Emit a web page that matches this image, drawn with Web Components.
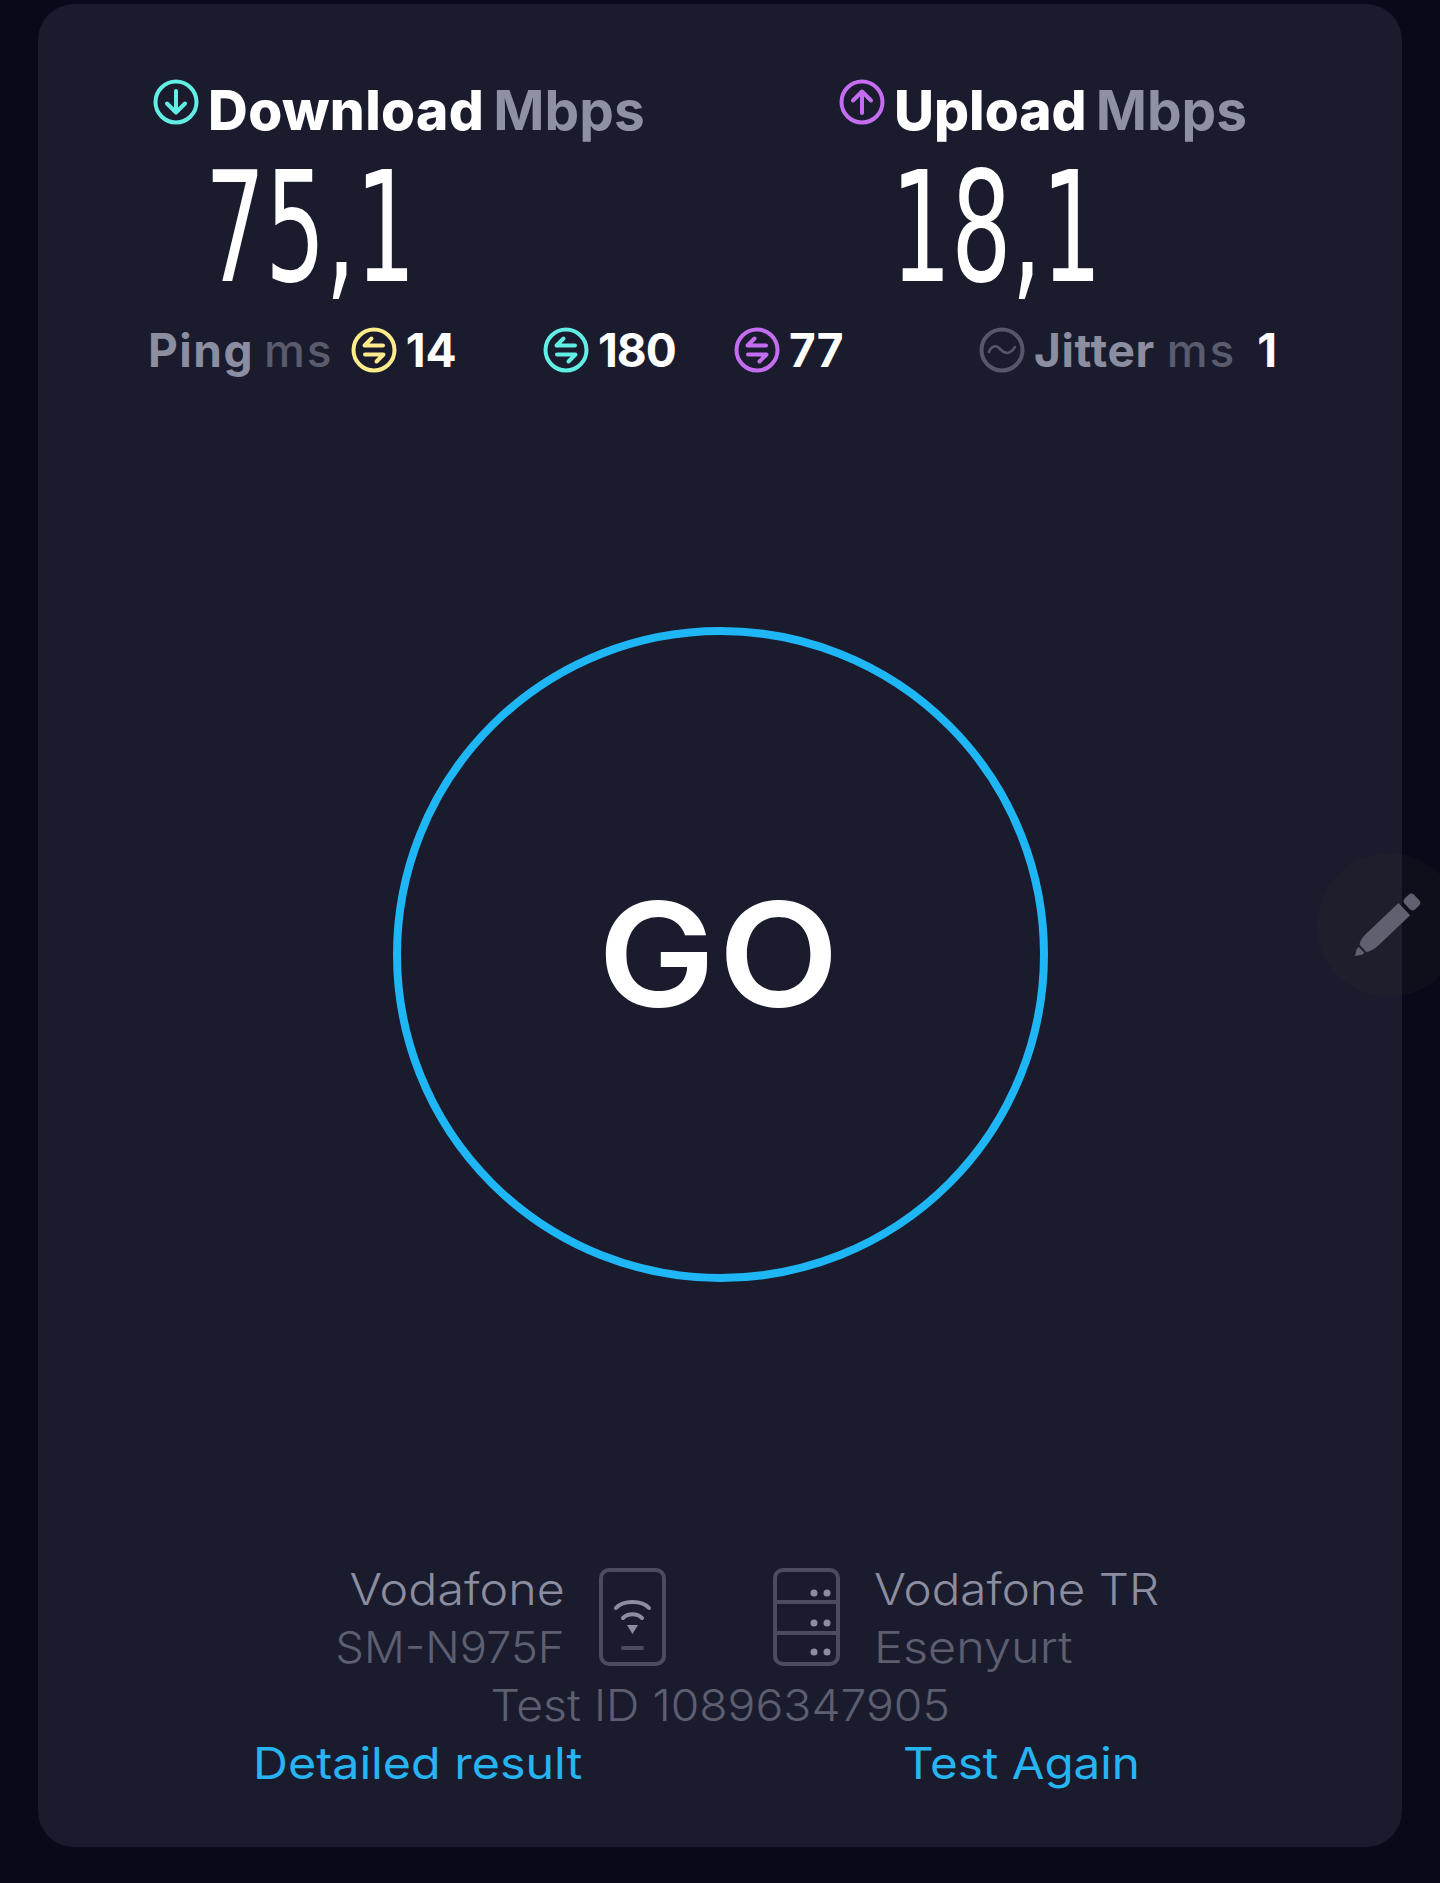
<!DOCTYPE html>
<html lang="en">
<head>
<meta charset="utf-8">
<title>Speed test</title>
<style>
html, body { margin: 0; padding: 0; background: #080a19; }
body { width: 1440px; height: 1883px; overflow: hidden; font-family: Inter, "Liberation Sans", sans-serif; }
</style>
</head>
<body>
<speed-card>
    <metric-row>
        <speed-metric kind="down" label="Download" unit="Mbps" value="75,1"></speed-metric>
        <speed-metric kind="up" label="Upload" unit="Mbps" value="18,1"></speed-metric>
    </metric-row>
    <stat-row></stat-row>
    <go-button></go-button>
    <test-info></test-info>
    <edit-fab></edit-fab>
</speed-card>

<script>
'use strict';

const ICON_COLORS = {down: '#62eee4', up: '#c56df0', ping: '#fdeb8c', muted: '#55586a'};

function circleIcon(color, inner) {
    return `<svg xmlns="http://www.w3.org/2000/svg" width="46" height="46" viewBox="0 0 46 46" fill="none"
        stroke="${color}" stroke-linecap="round" stroke-linejoin="round">
        <circle cx="23" cy="23" r="20.5" stroke-width="4"/>
        ${inner}
    </svg>`;
}

const TRANSFER = `<path stroke-width="4" d="M32 18.5H13.5L20.5 11.5M14 27.5H32.5L25.5 34.5"/>`;
const ARROW_DOWN = `<path stroke-width="4" d="M23 12V33M14 24.5L23 33.5L32 24.5"/>`;
const ARROW_UP = `<path stroke-width="4" d="M23 34V13M14 21.5L23 12.5L32 21.5"/>`;
const WAVE = `<path stroke-width="2.5" d="M10 25C12 19 17 18 20 21C23 24 27 28 31 25C33 24 35 22 36 20"/>`;

class SpeedCard extends HTMLElement {
    constructor() {
        super();
        this.shadow = this.attachShadow({mode: 'open'});
        this.shadow.innerHTML = `
            <style>
            :host {
                display: block;
                position: relative;
                box-sizing: border-box;
                width: 1364px;
                height: 1843px;
                margin: 4px 0 0 38px;
                padding-top: 76px;
                background: #1a1c2e;
                border-radius: 36px;
            }
            </style>
            <slot></slot>
        `;
    }
}

class MetricRow extends HTMLElement {
    constructor() {
        super();
        this.shadow = this.attachShadow({mode: 'open'});
        this.shadow.innerHTML = `
            <style>
            :host {
                display: grid;
                grid-template-columns: 686px 1fr;
                padding-left: 115px;
            }
            </style>
            <slot></slot>
        `;
    }
}

class SpeedMetric extends HTMLElement {
    constructor() {
        super();
        this.shadow = this.attachShadow({mode: 'open'});
        const kind = this.getAttribute('kind');
        const inner = kind === 'down' ? ARROW_DOWN : ARROW_UP;
        this.shadow.innerHTML = `
            <style>
            :host {
                display: block;
            }
            .head {
                display: flex;
                height: 60px;
                line-height: 60px;
                font-size: 55px;
                font-weight: 800;
                white-space: nowrap;
            }
            .head svg {
                flex: none;
                margin: -1px 9px 0 0;
            }
            .label { color: #fff; letter-spacing: ${kind === 'down' ? '0.4px' : '0'}; }
            .unit { color: #8e90a4; font-weight: 700; margin-left: 9px; }
            .value {
                height: 128px;
                margin: 23px 0 0 52px;
                line-height: 130px;
                font-family: "DejaVu Sans", sans-serif;
                font-size: 154px;
                color: #fff;
                white-space: nowrap;
                transform: scaleX(0.615);
                transform-origin: 0 50%;
            }
            </style>
            <div class="head">
                ${circleIcon(ICON_COLORS[kind], inner)}
                <span class="label">${this.getAttribute('label')}</span>
                <span class="unit">${this.getAttribute('unit')}</span>
            </div>
            <div class="value">${this.getAttribute('value')}</div>
        `;
    }
}

class StatRow extends HTMLElement {
    constructor() {
        super();
        this.shadow = this.attachShadow({mode: 'open'});
        this.shadow.innerHTML = `
            <style>
            :host {
                display: flex;
                align-items: center;
                height: 50px;
                margin-top: 34px;
                padding-left: 110px;
                font-size: 46px;
                line-height: 50px;
                font-weight: 700;
                white-space: nowrap;
            }
            .item { display: flex; align-items: center; }
            svg { flex: none; margin-right: 9px; }
            .name { color: #8b8da0; }
            .unit { color: #5a5c6e; font-weight: 500; }
            .num { color: #fff; }
            .ping { width: 308px; }
            .ping .name { letter-spacing: 1.5px; }
            .ping .unit { margin: 0 17px 0 10px; letter-spacing: 2px; }
            .dl { width: 132px; margin-left: 87px; }
            .dl .num { letter-spacing: -1px; }
            .ul { width: 110px; margin-left: 59px; }
            .jit { margin-left: 135px; }
            .jit .name { letter-spacing: 0.6px; }
            .jit .unit { margin: 0 21px 0 12px; letter-spacing: 2px; }
            </style>
            <div class="item ping">
                <span class="name">Ping</span><span class="unit">ms</span>
                ${circleIcon(ICON_COLORS.ping, TRANSFER)}
                <span class="num">14</span>
            </div>
            <div class="item dl">
                ${circleIcon(ICON_COLORS.down, TRANSFER)}
                <span class="num">180</span>
            </div>
            <div class="item ul">
                ${circleIcon(ICON_COLORS.up, TRANSFER)}
                <span class="num">77</span>
            </div>
            <div class="item jit">
                ${circleIcon(ICON_COLORS.muted, WAVE)}
                <span class="name">Jitter</span><span class="unit">ms</span>
                <span class="num">1</span>
            </div>
        `;
    }
}

class GoButton extends HTMLElement {
    constructor() {
        super();
        this.shadow = this.attachShadow({mode: 'open'});
        this.shadow.innerHTML = `
            <style>
            :host {
                display: flex;
                align-items: center;
                justify-content: center;
                box-sizing: border-box;
                width: 655px;
                height: 655px;
                margin: 252px 0 0 355px;
                border: 8px solid #1fb6f5;
                border-radius: 50%;
                color: #fff;
                font-size: 145px;
                font-weight: 600;
                letter-spacing: 3px;
            }
            span { display: inline-block; transform: scaleX(1.08); }
            </style>
            <span>GO</span>
        `;
    }
}

class TestInfo extends HTMLElement {
    constructor() {
        super();
        this.shadow = this.attachShadow({mode: 'open'});
        this.shadow.innerHTML = `
            <style>
            :host {
                display: block;
                margin-top: 278px;
                font-size: 44px;
                line-height: 58px;
                font-weight: 350;
                color: #8b8da0;
                white-space: nowrap;
            }
            .top { display: flex; align-items: flex-start; }
            .left { width: 527px; text-align: right; }
            .left span, .right span, .id span, .links span { display: inline-block; transform: scaleX(var(--sx)); }
            .left span { transform-origin: 100% 50%; }
            .right span, .links span { transform-origin: 0 50%; }
            .dim { color: #5d5f71; }
            svg { flex: none; margin-top: 8px; }
            .phone { margin-left: 34px; }
            .server { margin-left: 107px; }
            .right { margin-left: 34px; }
            .id { text-align: center; color: #5d5f71; }
            .links { display: flex; color: #27b4f2; font-weight: 400; }
            .detail { margin-left: 215px; width: 650px; }
            </style>
            <div class="top">
                <div class="left"><span style="--sx:1.1">Vodafone</span><br><span class="dim" style="--sx:1.03">SM-N975F</span></div>
                <svg class="phone" xmlns="http://www.w3.org/2000/svg" width="67" height="98" viewBox="0 0 67 98" fill="none" stroke="#4a4d60" stroke-width="4" stroke-linecap="round">
                    <rect x="2" y="2" width="63" height="94" rx="8"/>
                    <path d="M24 80H43"/>
                    <path stroke="#8b8da0" d="M17 40C24 32 43 32 50 40M24 50C29 45 38 45 43 50"/>
                    <path stroke="none" fill="#8b8da0" d="M28 57H39L33.500 66Z"/>
                </svg>
                <svg class="server" xmlns="http://www.w3.org/2000/svg" width="67" height="98" viewBox="0 0 67 98" fill="none" stroke="#4a4d60" stroke-width="4">
                    <rect x="2" y="2" width="63" height="94" rx="8"/>
                    <path d="M2 34H65M2 65H65"/>
                    <g stroke="none" fill="#8b8da0">
                        <circle cx="41" cy="25" r="3.500"/><circle cx="54" cy="25" r="3.500"/>
                        <circle cx="41" cy="55" r="3.500"/><circle cx="54" cy="55" r="3.500"/>
                        <circle cx="41" cy="84" r="3.500"/><circle cx="54" cy="84" r="3.500"/>
                    </g>
                </svg>
                <div class="right"><span style="--sx:1.08">Vodafone TR</span><br><span class="dim" style="--sx:1.105">Esenyurt</span></div>
            </div>
            <div class="id"><span style="--sx:1.053">Test ID 10896347905</span></div>
            <div class="links"><div class="detail"><span style="--sx:1.1">Detailed result</span></div><div><span style="--sx:1.08">Test Again</span></div></div>
        `;
    }
}

class EditFab extends HTMLElement {
    constructor() {
        super();
        this.shadow = this.attachShadow({mode: 'open'});
        this.shadow.innerHTML = `
            <style>
            :host {
                position: absolute;
                left: 1279px;
                top: 849px;
                width: 144px;
                height: 144px;
                border-radius: 50%;
                background: rgba(48, 48, 36, 0.14);
            }
            svg { display: block; }
            </style>
            <svg xmlns="http://www.w3.org/2000/svg" width="144" height="144" viewBox="0 0 144 144">
                <g transform="translate(38 103) rotate(-43.500)" fill="#5f6170">
                    <path d="M0 0L6-4H9V4H6Z"/>
                    <path d="M11-5C15-8 20-8.500 27-8.500H68V8.500H27C20 8.500 15 8 11 5Z"/>
                    <rect x="72" y="-7.500" width="13" height="15" rx="4"/>
                </g>
            </svg>
        `;
    }
}

customElements.define('speed-card', SpeedCard);
customElements.define('metric-row', MetricRow);
customElements.define('speed-metric', SpeedMetric);
customElements.define('stat-row', StatRow);
customElements.define('go-button', GoButton);
customElements.define('test-info', TestInfo);
customElements.define('edit-fab', EditFab);
</script>
</body>
</html>
